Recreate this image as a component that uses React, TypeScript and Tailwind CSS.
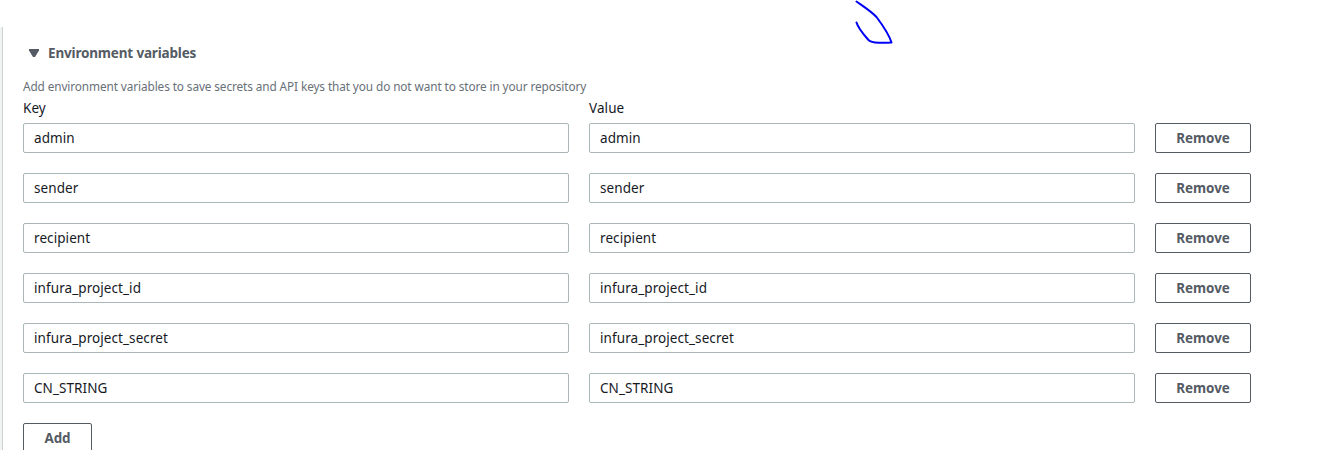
import React from "react";

const variables = [
  { key: "admin", value: "admin" },
  { key: "sender", value: "sender" },
  { key: "recipient", value: "recipient" },
  { key: "infura_project_id", value: "infura_project_id" },
  { key: "infura_project_secret", value: "infura_project_secret" },
  { key: "CN_STRING", value: "CN_STRING" },
];

function Field({ label, text }: { label: string; text: string }) {
  return (
    <input
      aria-label={label}
      defaultValue={text}
      className="h-[30px] w-[546px] rounded-[2px] border border-[#aab7b8] bg-white px-2.5 text-[13.5px] tracking-[0.08px] text-[#16191f] outline-none"
    />
  );
}

function Button({ children, className }: { children: React.ReactNode; className: string }) {
  return (
    <button
      className={`h-[30px] shrink-0 rounded-[2px] border border-[#545b64] bg-white text-center text-[13.4px] font-bold leading-7 text-[#545b64] ${className}`}
    >
      {children}
    </button>
  );
}

function PenStroke() {
  return (
    <svg className="absolute left-[850px] top-0" width="50" height="50" viewBox="0 0 50 50" fill="none" aria-hidden="true">
      <path
        d="M6.5 1.500C12 5.500 21 11 26.500 17C31 23 39.500 36 41.500 42.500C37 42.500 33 43 28.500 42.700C24 42.500 20.500 42 18.500 40C15 36 8.500 29 6.500 22.500"
        stroke="#0000f5"
        strokeWidth="2"
        strokeLinecap="round"
        strokeLinejoin="round"
      />
    </svg>
  );
}

export default function App() {
  return (
    <div className="relative h-[450px] w-[1328px] overflow-hidden bg-white pt-[27px] font-['Noto_Sans','Open_Sans',sans-serif]">
      <PenStroke />
      <div className="flex h-full">
        <div className="w-[2px] shrink-0 bg-[#f2f3f3]" />
        <main className="flex-1 border-l border-[#c9d1d1] pl-5 pt-4">
          <h2 className="ml-[6px] flex h-5 items-center gap-[9px] text-[13.5px] font-bold leading-5 text-[#545b64]">
            <svg width="10" height="8" viewBox="0 0 10 8" className="shrink-0" aria-hidden="true">
              <path d="M0 0h10v1.500L6 8H4L0 1.500z" fill="#545b64" />
            </svg>
            <span className="whitespace-nowrap tracking-[-0.17px]">Environment variables</span>
          </h2>
          <p className="mt-[15px] h-4 whitespace-nowrap text-[11.8px] leading-[17px] tracking-[-0.1px] text-[#687078]">
            Add environment variables to save secrets and API keys that you do not want to store in your repository
          </p>
          <div className="mt-1 flex h-5 gap-5 text-[13.5px] leading-5 tracking-[0.08px] text-[#16191f]">
            <div className="w-[546px]">Key</div>
            <div className="w-[546px]">Value</div>
          </div>
          <div className="mt-[5px] flex flex-col gap-5">
            {variables.map((variable) => (
              <div key={variable.key} className="flex gap-5">
                <Field label="Key" text={variable.key} />
                <Field label="Value" text={variable.value} />
                <Button className="w-24">Remove</Button>
              </div>
            ))}
          </div>
          <Button className="mt-5 w-[69px]">Add</Button>
        </main>
      </div>
    </div>
  );
}
